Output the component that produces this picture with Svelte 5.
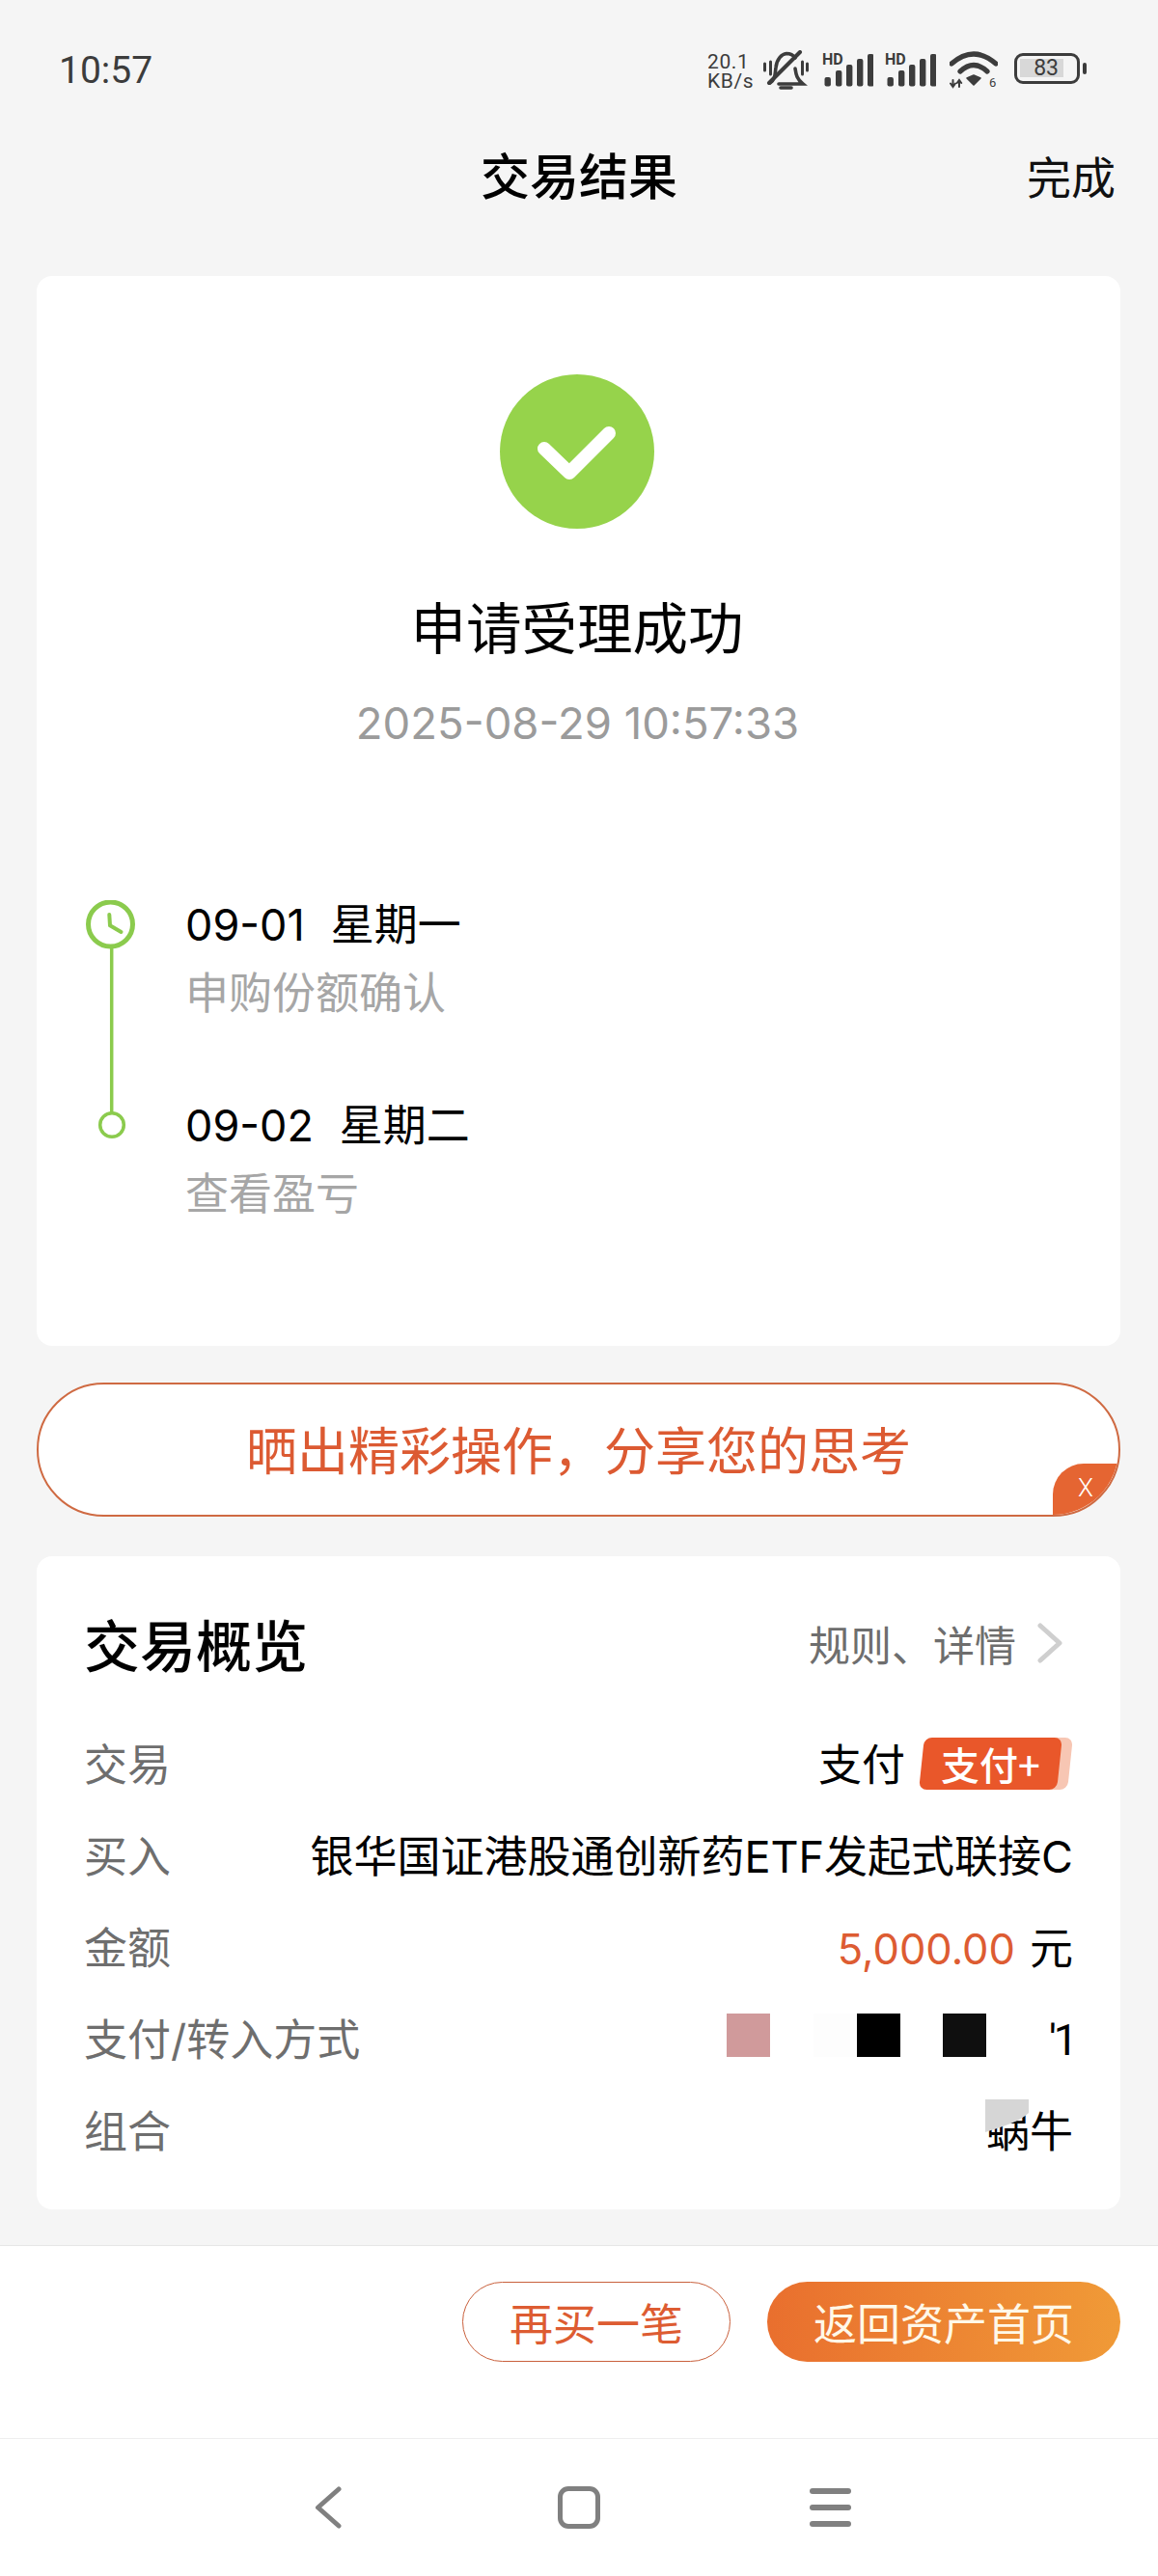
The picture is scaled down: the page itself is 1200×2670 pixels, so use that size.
<script>
  const rows = [
    { label: '买入', value: '银华国证港股通创新药ETF发起式联接C' }
  ];
  const bars = [
    { x: 2.5, y: 24 }, { x: 14, y: 17 }, { x: 25, y: 11 }, { x: 36, y: 5 }, { x: 47, y: 0 }
  ];
</script>

<div class="page">
  <div class="status">
    <span class="time">10:57</span>
    <div class="icons">
      <div class="speed"><span>20.1</span><span>KB/s</span></div>
      <svg class="bell" width="47" height="41" viewBox="0 0 47 41" fill="none" stroke="#3c3c3c" stroke-linecap="round">
        <path d="M7 34 C13 30 12 24 13 18 C14 9 19 4 24 3.5 C28 3.5 31 5 33 8" stroke-width="3.6" />
        <path d="M33 19 C34 26 35 30 41 35 H16" stroke-width="3.6" />
        <path d="M6 34 L38 2" stroke-width="4" />
        <path d="M18 39 H29" stroke-width="3.6" />
        <path d="M1.5 14 V21 M7.5 12 V25 M40.5 12 V25 M45.5 14 V21" stroke-width="3" />
      </svg>
      {#each [0, 1] as n (n)}
        <svg class="signal" width="53" height="40" viewBox="0 -5 53 40">
          <text x="0" y="11" class="hd">HD</text>
          {#each bars as b (b.x)}
            <rect x={b.x} y={b.y} width="6.4" height={33.5 - b.y} rx="2" fill="#3c3c3c" />
          {/each}
        </svg>
      {/each}
      <svg class="wifi" width="50" height="44" viewBox="0 0 50 44" fill="none" stroke="#3c3c3c" stroke-linecap="round">
        <path d="M2 13 Q25 -7 48 13" stroke-width="5.2" />
        <path d="M11 21 Q25 8 39 21" stroke-width="5.2" />
        <path d="M18 28 L25 25 L32 28 L25 35 Z" fill="#3c3c3c" stroke-width="1.6" stroke-linejoin="round" />
        <path d="M3.5 30 V37 M1 33.5 L3.5 37 L6 33.5 M10 37 V30 M7.8 33 L10 30 L12.2 33" stroke-width="2" />
        <text x="41" y="37" class="six">6</text>
      </svg>
      <div class="battery">
        <div class="cell"><span class="level">83</span></div>
        <i class="tip"></i>
      </div>
    </div>
  </div>

  <header class="nav-head">
    <h1>交易结果</h1>
    <span class="done">完成</span>
  </header>

  <section class="card result">
    <svg class="ok" width="160" height="160" viewBox="0 0 160 160">
      <circle cx="80" cy="80" r="80" fill="#96d34b" />
      <path d="M46 77 L72 102 L113 61" fill="none" stroke="#fff" stroke-width="14" stroke-linecap="round" stroke-linejoin="round" />
    </svg>
    <div class="headline">申请受理成功</div>
    <div class="stamp">2025-08-29 10:57:33</div>

    <div class="timeline">
      <svg class="rail" width="54" height="250" viewBox="0 0 54 250" fill="none" stroke="#8bcb4d">
        <circle cx="25.5" cy="25" r="23" stroke-width="5" />
        <path d="M24.3 15 L25 26.3 L36.5 33" stroke-width="4" stroke-linecap="round" stroke-linejoin="round" />
        <path d="M26.7 50 V220" stroke-width="3.5" />
        <circle cx="27" cy="233" r="12.3" stroke-width="3.5" />
      </svg>
      <div class="steps">
        <div class="step">
          <div class="when"><span class="d">09-01</span><span>星期一</span></div>
          <div class="what">申购份额确认</div>
        </div>
        <div class="step">
          <div class="when"><span class="d">09-02</span><span>星期二</span></div>
          <div class="what">查看盈亏</div>
        </div>
      </div>
    </div>
  </section>

  <div class="share">
    <span class="share-text">晒出精彩操作，分享您的思考</span>
    <div class="close">X</div>
  </div>

  <section class="card overview">
    <div class="ov-head">
      <h2>交易概览</h2>
      <div class="more">
        <span>规则、详情</span>
        <svg width="26" height="42" viewBox="0 0 26 42" fill="none" stroke="#cfcfcf" stroke-width="5" stroke-linecap="round" stroke-linejoin="round">
          <path d="M3 3 L23 21 L3 39" />
        </svg>
      </div>
    </div>

    <div class="row">
      <span class="k">交易</span>
      <div class="v pay">
        <span>支付</span>
        <div class="tag"><span class="tag-text">支付+</span></div>
      </div>
    </div>
    {#each rows as r (r.label)}
      <div class="row">
        <span class="k">{r.label}</span>
        <span class="v">{r.value}</span>
      </div>
    {/each}
    <div class="row">
      <span class="k">金额</span>
      <div class="v amount"><span class="money">5,000.00</span><span>元</span></div>
    </div>
    <div class="row">
      <span class="k">支付/转入方式</span>
      <div class="v method">
        <i class="sq s1"></i>
        <i class="sq s2"></i>
        <i class="sq s3"></i>
        <i class="sq s4"></i>
        <span class="tail">'1</span>
      </div>
    </div>
    <div class="row">
      <span class="k">组合</span>
      <div class="v combo">
        <span>蜗牛</span>
        <svg class="mask" width="45" height="34" viewBox="0 0 45 34"><path d="M0 0 H45 V14 C36 23 16 29 0 34 Z" fill="#d6d6d6" /></svg>
      </div>
    </div>
  </section>

  <div class="actions">
    <button class="ghost">再买一笔</button>
    <button class="solid">返回资产首页</button>
  </div>

  <nav class="sysnav">
    <svg class="back" width="28" height="44" viewBox="0 0 28 44" fill="none" stroke="#808080" stroke-width="5" stroke-linecap="round" stroke-linejoin="round">
      <path d="M25 3 L3.5 22 L25 41" />
    </svg>
    <i class="home"></i>
    <div class="menu"><i></i><i></i><i></i></div>
  </nav>
</div>

<style>
  :global(body) {
    margin: 0;
    background: #f5f5f5;
  }
  .page {
    width: 1200px;
    height: 2670px;
    overflow: hidden;
    background: #f5f5f5;
    font-family: Inter, "Noto Sans CJK SC", sans-serif;
    color: #000;
    display: flex;
    flex-direction: column;
  }
  .status {
    height: 144px;
    display: flex;
    justify-content: space-between;
    align-items: center;
    padding: 0 74px 0 61px;
    box-sizing: border-box;
    color: #3c3c3c;
  }
  .time {
    font: 400 39px/1 Roboto, sans-serif;
    margin-top: 2px;
  }
  .icons {
    display: flex;
    align-items: flex-start;
    height: 44px;
  }
  .speed {
    display: flex;
    flex-direction: column;
    font: 400 21px/20px Roboto, sans-serif;
    width: 58px;
    letter-spacing: 0.6px;
    margin-top: 4px;
  }
  .bell { margin: 2px 14px 0 0; flex: none; }
  .signal { margin: 1px 12px 0 0; flex: none; }
  .signal:nth-of-type(3) { margin-right: 14px; }
  .hd {
    font: 700 16px Roboto, sans-serif;
    fill: #3c3c3c;
  }
  .six {
    font: 400 13px Roboto, sans-serif;
    fill: #3c3c3c;
    stroke: none;
  }
  .wifi { margin-top: 3px; flex: none; }
  .battery {
    display: flex;
    align-items: center;
    margin: 5px 0 0 17px;
  }
  .cell {
    width: 68px;
    height: 32px;
    box-sizing: border-box;
    border: 3.5px solid #3c3c3c;
    border-radius: 9px;
    padding: 3px;
    margin-right: 3px;
  }
  .level {
    display: block;
    width: 45px;
    height: 19px;
    background: #d8d8d8;
    font: 400 23px/19px Roboto, sans-serif;
    text-align: right;
    padding-right: 5px;
    box-sizing: border-box;
  }
  .tip {
    width: 4px;
    height: 12px;
    background: #3c3c3c;
    border-radius: 2px;
  }
  .nav-head {
    height: 80px;
    margin-bottom: 62px;
    position: relative;
    display: flex;
    justify-content: center;
    align-items: center;
  }
  h1 {
    margin: 0;
    font-size: 51px;
    font-weight: 500;
    line-height: 80px;
  }
  .done {
    position: absolute;
    right: 44px;
    top: 0;
    font-size: 46px;
    line-height: 80px;
    color: #111;
  }
  .card {
    margin: 0 39px 0 38px;
    background: #fff;
    border-radius: 16px;
  }
  .result {
    height: 1109px;
    box-sizing: border-box;
    padding-top: 102px;
    display: flex;
    flex-direction: column;
    align-items: center;
  }
  .ok { display: block; margin-right: 3px; }
  .headline {
    margin-top: 64px;
    margin-right: 3px;
    font-size: 57.5px;
    line-height: 80px;
  }
  .stamp {
    margin-top: 28px;
    margin-right: 2px;
    font-size: 45.5px;
    line-height: 60px;
    color: #9b9b9b;
  }
  .timeline {
    align-self: stretch;
    margin-top: 149px;
    padding-left: 51px;
    display: flex;
    gap: 49px;
  }
  .rail { margin-top: 4px; flex: none; }
  .steps {
    display: flex;
    flex-direction: column;
    gap: 77px;
  }
  .when {
    font-size: 45px;
    line-height: 60px;
    display: flex;
    gap: 27px;
  }
  .what {
    margin-top: 11px;
    font-size: 45px;
    line-height: 60px;
    color: #a6a6a6;
  }
  .share {
    margin: 38px 39px 41px 38px;
    height: 139px;
    box-sizing: border-box;
    border: 2px solid #cf6a42;
    border-radius: 70px;
    background: #fff;
    color: #dc5a32;
    font-size: 53px;
    display: flex;
    justify-content: center;
    align-items: center;
    position: relative;
    overflow: hidden;
  }
  .share-text { margin-bottom: 3px; }
  .close {
    position: absolute;
    right: -2px;
    bottom: -2px;
    width: 70px;
    height: 55px;
    background: #e56532;
    border-top-left-radius: 32px;
    color: #fff;
    font: 300 26px/50px Roboto, sans-serif;
    text-align: center;
    padding-right: 2px;
    box-sizing: border-box;
  }
  .overview {
    height: 677px;
    box-sizing: border-box;
    padding: 55px 49px 0 49px;
  }
  .ov-head {
    display: flex;
    justify-content: space-between;
    align-items: center;
    height: 70px;
    margin-bottom: 62px;
  }
  h2 {
    margin: 0;
    font-size: 58px;
    font-weight: 500;
  }
  .more {
    display: flex;
    align-items: center;
    gap: 22px;
    font-size: 43px;
    color: #6e6e6e;
    padding-right: 11px;
  }
  .row {
    height: 60px;
    margin-bottom: 35px;
    display: flex;
    justify-content: space-between;
    align-items: center;
    font-size: 45px;
    line-height: 60px;
  }
  .k { color: #6e6e6e; }
  .v {
    display: flex;
    align-items: center;
    color: #000;
  }
  .pay { gap: 17px; }
  .tag {
    width: 143px;
    height: 54px;
    margin: -4px 14px 0 0;
    position: relative;
    background: #e9572a;
    border-radius: 8px;
    transform: skewX(-6deg);
    box-shadow: 11px 0 0 #f7c6b3;
    color: #fff;
    font-size: 40px;
    line-height: 54px;
    text-align: center;
  }
  .tag-text {
    display: block;
    transform: skewX(6deg);
    font-family: "Noto Sans CJK SC", sans-serif;
    font-weight: 500;
  }
  .amount { gap: 15px; }
  .money { color: #dd5c32; font-size: 43.5px; }
  .method { height: 60px; }
  .sq {
    display: block;
    width: 45px;
    height: 45px;
    margin-top: -11px;
  }
  .s1 { background: #d09a9b; margin-right: 45px; }
  .s2 { background: #fdfdfd; }
  .s3 { background: #000; margin-right: 44px; }
  .s4 { background: #0f0f0f; margin-right: 65px; }
  .tail {
    display: block;
    width: 25px;
    font-family: Roboto, sans-serif;
    letter-spacing: -3px;
    white-space: nowrap;
  }
  .combo { position: relative; }
  .mask {
    position: absolute;
    left: -1px;
    top: -4px;
  }
  .actions {
    height: 200px;
    box-sizing: border-box;
    margin-top: 37px;
    border-top: 1px solid #e6e6e6;
    background: #fff;
    padding: 37px 39px 0 0;
    display: flex;
    justify-content: flex-end;
    gap: 38px;
    align-items: flex-start;
  }
  button {
    height: 83px;
    border-radius: 42px;
    font-family: "Noto Sans CJK SC", sans-serif;
    font-size: 45px;
    padding: 0;
  }
  .ghost {
    width: 278px;
    border: 1.5px solid #c9603c;
    background: #fff;
    color: #dd5c32;
  }
  .solid {
    width: 366px;
    border: none;
    background: linear-gradient(90deg, #e96f2e, #f09a37);
    color: #fff8e8;
  }
  .sysnav {
    height: 143px;
    box-sizing: border-box;
    border-top: 1px solid #eeeeee;
    background: #fff;
    padding: 49px 0 0 326px;
    display: flex;
    align-items: flex-start;
  }
  .back { display: block; }
  .home {
    display: block;
    width: 44px;
    height: 44px;
    box-sizing: border-box;
    border: 5px solid #808080;
    border-radius: 11px;
    margin-left: 224px;
  }
  .menu {
    margin-left: 217px;
    margin-top: 2px;
    width: 43px;
    display: flex;
    flex-direction: column;
    gap: 11px;
  }
  .menu i {
    display: block;
    height: 6px;
    background: #808080;
    border-radius: 3px;
  }
</style>
